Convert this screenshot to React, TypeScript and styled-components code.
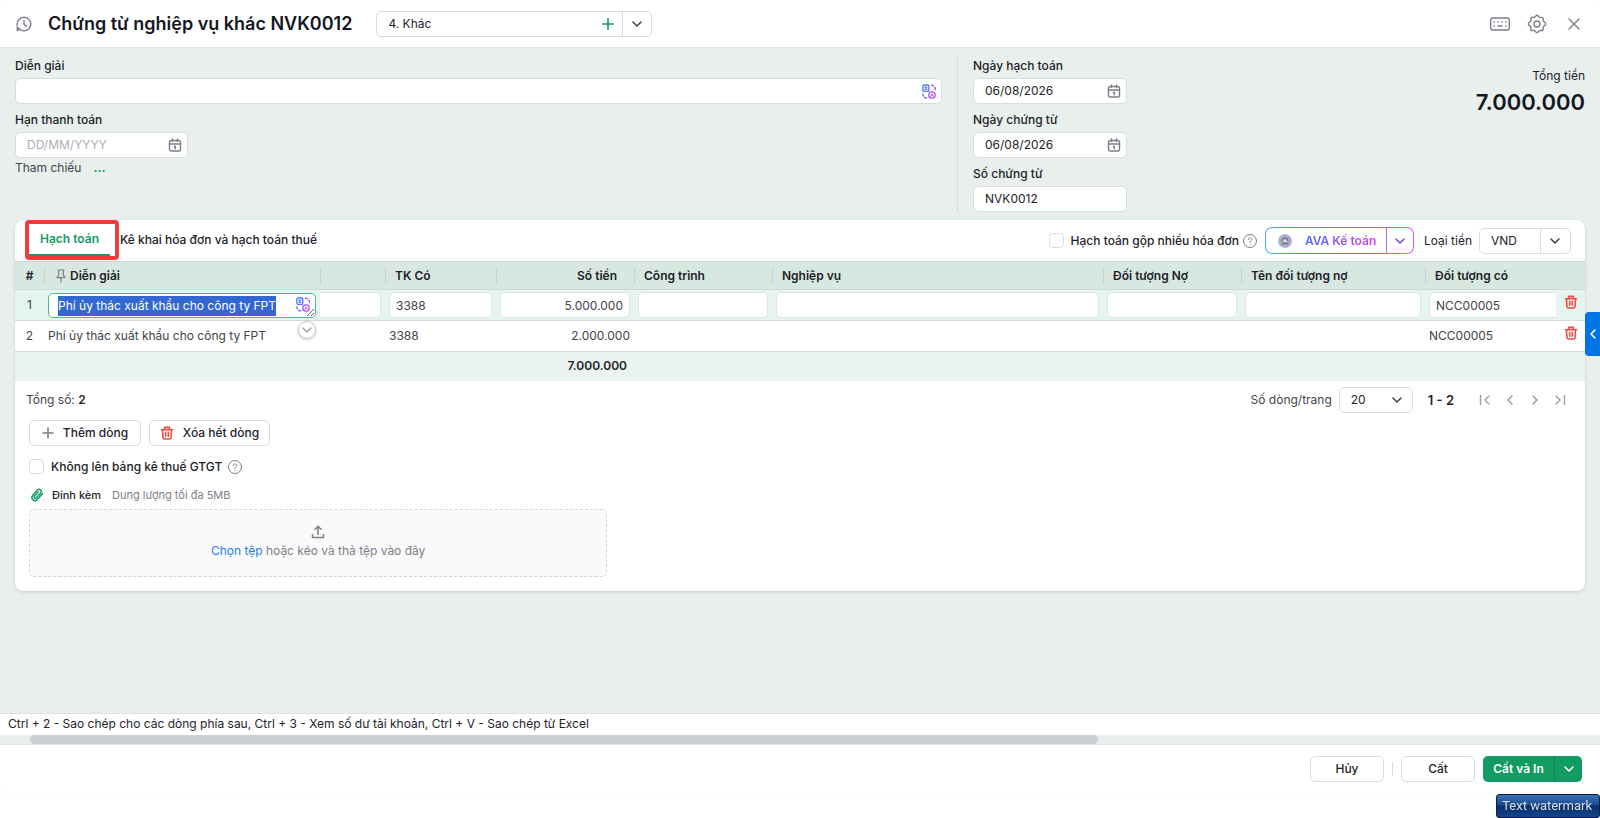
import React, { useEffect, useRef } from 'react';
import styled, { createGlobalStyle, css } from 'styled-components';

const c = {
  text: '#1f2229',
  soft: '#3f434c',
  grey: '#7b7f8a',
  faint: '#9a9ea9',
  line: '#d9dce1',
  canvas: '#e8efec',
  head: '#d8e8e0',
  active: '#e5f4ee',
  green: '#129b62',
  red: '#f04a40',
  blue: '#2680eb',
};

const Global = createGlobalStyle`
  *, *::before, *::after { box-sizing: border-box; }
  body { margin: 0; background: #fff; }
  body, button, input, select, textarea {
    font-family: Inter, "Liberation Sans", sans-serif;
    font-size: 12px;
    line-height: 20px;
    color: ${c.text};
  }
  button { cursor: pointer; }
`;

const Page = styled.div`
  display: flex;
  flex-direction: column;
  min-height: 100vh;
  padding-bottom: 25px;
  background: #fff;
`;

const Window = styled.div`
  display: flex;
  flex-direction: column;
  flex: 1;
  border-radius: 8px;
  box-shadow: 0 0 1px #e3e6e8;
  background: #fff;
`;

const Header = styled.header`
  display: flex;
  align-items: center;
  height: 48px;
  padding: 0 16px;
  border-bottom: 1px solid #dde1e2;
`;

const Title = styled.h1`
  margin: 0 24px 0 0;
  font-size: 18px;
  font-weight: 600;
  line-height: 28px;
  color: #14171f;
`;

const IconButton = styled.button<{ $tone?: string }>`
  display: inline-flex;
  align-items: center;
  justify-content: center;
  flex: none;
  padding: 0;
  border: 0;
  background: none;
  color: ${(p) => p.$tone ?? c.grey};
`;

const HistoryButton = styled(IconButton)`
  margin-right: 16px;
`;

const ToolButton = styled(IconButton)`
  width: 20px;
`;

const Combo = styled.div<{ $width: number }>`
  display: flex;
  width: ${(p) => p.$width}px;
  height: 26px;
  border: 1px solid ${c.line};
  border-radius: 5px;
  background: #fff;
  overflow: hidden;
`;

const ComboInput = styled.input`
  flex: 1;
  min-width: 0;
  padding: 0 11px;
  border: 0;
  outline: 0;
  background: none;
`;

const ComboArrow = styled(IconButton)`
  width: 29px;
  border-left: 1px solid ${c.line};
  color: ${c.soft};
`;

const AddButton = styled(IconButton)`
  width: 28px;
`;

const HeaderTools = styled.div`
  display: flex;
  align-items: center;
  gap: 17px;
  margin-left: auto;
`;

const Body = styled.main`
  flex: 1;
  padding: 8px 15px 100px;
  background: ${c.canvas};
`;

const Form = styled.section`
  display: flex;
`;

const FormLeft = styled.div`
  flex: 1;
  padding-right: 15px;
`;

const FormRight = styled.div`
  width: 458px;
  padding-left: 15px;
  border-left: 1px solid #d5dadb;
`;

const Total = styled.div`
  width: 170px;
  padding-top: 10px;
  text-align: right;
`;

const TotalValue = styled.div`
  font-size: 22px;
  font-weight: 600;
  line-height: 32px;
  color: #14171f;
`;

const Field = styled.div<{ $width?: number; $last?: boolean }>`
  display: flex;
  flex-direction: column;
  width: ${(p) => (p.$width ? p.$width + 'px' : '100%')};
  padding-bottom: ${(p) => (p.$last ? 0 : 6)}px;
`;

const Label = styled.label`
  padding-bottom: 2px;
  line-height: 20px;
  font-weight: 500;
`;

const Box = styled.div`
  display: flex;
  align-items: center;
  height: 26px;
  padding-right: 5px;
  border: 1px solid ${c.line};
  border-radius: 5px;
  background: #fff;
`;

const BoxInput = styled.input`
  flex: 1;
  min-width: 0;
  padding: 0 11px;
  border: 0;
  outline: 0;
  background: none;
  &::placeholder { color: #a9adb8; }
`;

const Refs = styled.div`
  display: flex;
  gap: 12px;
  color: ${c.soft};
`;

const MoreLink = styled.a`
  font-weight: 700;
  color: ${c.green};
  text-decoration: none;
`;

const Card = styled.section`
  margin-top: 8px;
  border-radius: 8px;
  background: #fff;
  box-shadow: 0 1px 3px rgba(30, 50, 45, 0.18);
`;

const TabBar = styled.div`
  display: flex;
  align-items: center;
  height: 41px;
  padding: 0 14px 0 10px;
`;

const Highlight = styled.div`
  display: flex;
  flex: none;
  align-self: flex-start;
  width: 94px;
  height: 40px;
  border: 4px solid #ee3d3d;
  border-radius: 4px;
`;

const Tab = styled.button<{ $active?: boolean }>`
  height: 32px;
  padding: ${(p) => (p.$active ? '0 11px' : '0 1px')};
  border: 0;
  border-bottom: 2px solid ${(p) => (p.$active ? c.green : 'transparent')};
  background: none;
  font-weight: ${(p) => (p.$active ? 600 : 500)};
  color: ${(p) => (p.$active ? c.green : c.text)};
  white-space: nowrap;
`;

const TabTools = styled.div`
  display: flex;
  align-items: center;
  margin-left: auto;
`;

const Check = styled.input`
  appearance: none;
  flex: none;
  width: 15px;
  height: 15px;
  margin: 0 7px 0 0;
  border: 1px solid ${c.line};
  border-radius: 4px;
  background: #fff;
`;

const CheckLabel = styled.label`
  display: inline-flex;
  align-items: center;
  margin-right: 4px;
  font-weight: 500;
`;

const AvaGroup = styled.div`
  display: flex;
  width: 149px;
  height: 27px;
  margin: 0 10px 0 8px;
  border: 1px solid transparent;
  border-radius: 7px;
  background:
    linear-gradient(#fff, #fff) padding-box,
    linear-gradient(90deg, #4aa8ff, #8a63ff 55%, #e453f2) border-box;
`;

const AvaMain = styled.button`
  display: flex;
  align-items: center;
  flex: 1;
  gap: 13px;
  padding: 0 0 0 12px;
  border: 0;
  border-right: 1px solid #a86bff;
  background: none;
`;

const AvaText = styled.span`
  background: linear-gradient(90deg, #4c6bff, #d43cf0);
  background-clip: text;
  color: transparent;
  font-weight: 600;
`;

const AvaArrow = styled(IconButton)`
  width: 26px;
  color: #5b5bf0;
`;

const SelectShell = styled.div<{ $width: number; $divided?: boolean }>`
  display: grid;
  grid-template-columns: 1fr 30px;
  align-items: center;
  width: ${(p) => p.$width}px;
  height: 26px;
  border: 1px solid ${c.line};
  border-radius: 5px;
  background: #fff;
  color: ${c.soft};
  svg {
    grid-area: 1 / 2;
    justify-self: center;
    pointer-events: none;
  }
  ${(p) =>
    p.$divided &&
    css`
      background: linear-gradient(${c.line}, ${c.line}) right 29px top / 1px 100% no-repeat #fff;
    `}
`;

const Select = styled.select`
  grid-area: 1 / 1 / 2 / 3;
  appearance: none;
  width: 100%;
  height: 24px;
  padding: 0 11px;
  border: 0;
  outline: 0;
  background: none;
`;

const SideLabel = styled.label`
  margin-right: 7px;
`;

const Table = styled.table`
  width: 100%;
  table-layout: fixed;
  border-collapse: collapse;
  border-top: 1px solid #c9d5d0;
`;

const Col = styled.col<{ $w?: number }>`
  width: ${(p) => (p.$w ? p.$w + 'px' : 'auto')};
`;

const Th = styled.th<{ $right?: boolean; $index?: boolean; $bare?: boolean }>`
  height: 28px;
  padding: ${(p) => (p.$index ? '0' : '0 17px 0 10px')};
  border-bottom: 1px solid #cbd8d3;
  background:
    linear-gradient(#c5d3cd, #c5d3cd) left center / ${(p) => (p.$bare ? 0 : 1)}px 17px no-repeat,
    ${c.head};
  font-weight: 600;
  text-align: ${(p) => (p.$index ? 'center' : p.$right ? 'right' : 'left')};
  white-space: nowrap;
`;

const PinHead = styled.span`
  display: flex;
  align-items: center;
  gap: 4px;
  padding-left: 2px;
  svg { color: ${c.grey}; }
`;

const Row = styled.tr<{ $active?: boolean }>`
  height: 31px;
  border-bottom: 1px solid #d3dad8;
  background: ${(p) => (p.$active ? c.active : '#fff')};
`;

const SumRow = styled.tr`
  height: 29px;
  background: #eaf3f0;
  font-weight: 600;
`;

const Td = styled.td<{ $align?: string; $pad?: string }>`
  padding: ${(p) => p.$pad ?? '0 4px'};
  text-align: ${(p) => p.$align ?? 'left'};
  white-space: nowrap;
  color: ${c.soft};
`;

const SumTd = styled(Td)`
  color: ${c.text};
`;

const CellInput = styled.input<{ $right?: boolean; $cut?: 'left' | 'right' }>`
  display: block;
  width: 100%;
  height: 26px;
  padding: 0 6px;
  border: 1px solid #e0e4e5;
  border-radius: 5px;
  outline: 0;
  background: #fff;
  color: ${c.soft};
  text-align: ${(p) => (p.$right ? 'right' : 'left')};
  ${(p) => p.$cut === 'left' && 'border-left: 0; border-top-left-radius: 0; border-bottom-left-radius: 0;'}
  ${(p) => p.$cut === 'right' && 'border-right: 0; border-top-right-radius: 0; border-bottom-right-radius: 0;'}
`;

const EditCell = styled.div`
  position: relative;
`;

const EditArea = styled.textarea`
  display: block;
  width: 100%;
  height: 25px;
  padding: 2px 36px 0 9px;
  border: 1px solid #4cb88a;
  border-radius: 5px;
  outline: 0;
  overflow: hidden;
  background: #fff;
  resize: both;
  white-space: nowrap;
  &::selection {
    background: #3367d1;
    color: #fff;
  }
`;

const EditIcon = styled.span`
  position: absolute;
  top: 4px;
  right: 6px;
  display: flex;
`;

const Expand = styled(IconButton)`
  position: absolute;
  top: 28px;
  right: 0;
  width: 18px;
  height: 18px;
  border: 1px solid #c6c9cf;
  border-radius: 50%;
  background: #fff;
  color: #a3a7af;
  box-shadow: 0 1px 3px rgba(0, 0, 0, 0.2);
`;

const Pager = styled.div`
  display: flex;
  align-items: center;
  height: 39px;
  padding: 0 18px 0 11px;
  color: ${c.soft};
`;

const Strong = styled.strong`
  font-weight: 600;
  color: ${c.text};
`;

const PagerTools = styled.div`
  display: flex;
  align-items: center;
  margin-left: auto;
`;

const PageRange = styled.strong`
  margin: 0 24px 0 15px;
  font-size: 13px;
  font-weight: 600;
  color: ${c.text};
`;

const PageNav = styled.div`
  display: flex;
  gap: 11px;
`;

const Actions = styled.div`
  display: flex;
  gap: 8px;
  padding: 0 14px;
`;

const Button = styled.button<{ $width?: number }>`
  display: inline-flex;
  align-items: center;
  justify-content: center;
  gap: 9px;
  width: ${(p) => (p.$width ? p.$width + 'px' : 'auto')};
  height: 26px;
  padding: 0 11px;
  border: 1px solid ${c.line};
  border-radius: 5px;
  background: #fff;
  font-weight: 500;
  white-space: nowrap;
  svg { color: ${c.grey}; }
  span svg { color: ${c.red}; }
`;

const OptionRow = styled.div`
  display: flex;
  align-items: center;
  gap: 2px;
  padding: 11px 14px 8px;
`;

const Attach = styled.div`
  display: flex;
  align-items: center;
  padding: 0 15px;
  font-size: 11px;
  color: ${c.grey};
`;

const AttachTitle = styled.span`
  margin: 0 11px 0 8px;
  font-weight: 500;
  color: ${c.text};
`;

const DropWrap = styled.div`
  display: grid;
  grid-template-columns: 3fr 5fr;
  padding: 4px 14px 14px;
`;

const Drop = styled.div`
  display: flex;
  flex-direction: column;
  align-items: center;
  justify-content: center;
  gap: 2px;
  height: 68px;
  border: 1px dashed #d3d6da;
  border-radius: 5px;
  background: #fafafb;
  color: ${c.grey};
`;

const PickLink = styled.a`
  color: ${c.blue};
  text-decoration: none;
`;

const Hint = styled.div`
  height: 22px;
  padding: 0 8px;
  border-top: 1px solid #dde1e2;
  background: #fff;
`;

const Track = styled.div`
  height: 10px;
  padding-left: 30px;
  border-bottom: 1px solid #dde1e2;
  background: ${c.canvas};
`;

const Thumb = styled.div`
  width: 68%;
  height: 9px;
  border-radius: 5px;
  background: #cccfd4;
`;

const Footer = styled.footer`
  display: flex;
  align-items: center;
  justify-content: flex-end;
  gap: 8px;
  height: 48px;
  padding: 0 18px 0 15px;
`;

const Divider = styled.span`
  width: 1px;
  height: 14px;
  background: ${c.line};
`;

const SaveGroup = styled.div`
  display: flex;
  height: 26px;
  border-radius: 5px;
  background: ${c.green};
  overflow: hidden;
`;

const SaveMain = styled.button`
  width: 72px;
  padding: 0;
  border: 0;
  border-right: 1px solid #0c8552;
  background: none;
  color: #fff;
  font-weight: 600;
`;

const SaveArrow = styled(IconButton)`
  width: 27px;
  color: #fff;
`;

const SideHandle = styled(IconButton)`
  position: absolute;
  top: 312px;
  right: 0;
  width: 15px;
  height: 44px;
  border-radius: 4px 0 0 4px;
  background: #0073e6;
  color: #fff;
`;

const Watermark = styled.div`
  position: fixed;
  right: 0;
  bottom: 0;
  height: 24px;
  padding: 0 7px 0 5px;
  border: 1px solid #0b1c3c;
  border-radius: 3px;
  background: linear-gradient(#3a72b4, #1c4c90 45%, #0b2f66 50%, #11448f);
  font-family: Roboto, Inter, sans-serif;
  font-size: 13px;
  line-height: 22px;
  color: #d8dde6;
`;

const Svg = ({ s = 16, w, children, sw = 1.4 }: { s?: number; w?: number; children: React.ReactNode; sw?: number }) => (
  <svg width={w ?? s} height={s} viewBox={`0 0 ${w ?? s} ${s}`} fill="none" stroke="currentColor" strokeWidth={sw} strokeLinecap="round" strokeLinejoin="round" aria-hidden="true">
    {children}
  </svg>
);

const Chevron = () => (
  <Svg s={12} sw={1.6}><path d="M2 4l4 4 4-4" /></Svg>
);
const Plus = () => (
  <Svg s={12} sw={1.6}><path d="M6 1v10M1 6h10" /></Svg>
);
const History = () => (
  <Svg>
    <path d="M1.300 9.500A6.800 6.800 0 1 1 5 14.200" />
    <path d="M.9 10.800v4.200l3.900-1.500z" fill="currentColor" strokeWidth="0.6" />
    <path d="M8 4.600v3.600l2.400 2" />
  </Svg>
);
const Keyboard = () => (
  <Svg s={14} w={20} sw={1.4}>
    <rect x="0.7" y="1" width="18.6" height="12" rx="1.5" />
    <path d="M4 5h.4M7.800 5h.4M11.800 5h.4M15.600 5h.4M4 9h.4M15.600 9h.4M8 9h4" />
  </Svg>
);
const Gear = () => (
  <Svg s={20} sw={1.4}>
    <path d="M10 1.300c1.200 0 1.500 1.700 2.500 2.100s2.500-.6 3.400.3 0 2.300.4 3.300 2.400 1.400 2.400 2.900-1.900 1.900-2.400 2.900.5 2.500-.4 3.400-2.300-.1-3.400.4-1.300 2.100-2.500 2.100-1.500-1.700-2.500-2.100-2.500.5-3.400-.4 0-2.300-.4-3.400-2.400-1.400-2.400-2.900 1.900-1.900 2.400-2.900-.5-2.400.4-3.300 2.400 0 3.400-.3S8.800 1.300 10 1.300z" />
    <circle cx="10" cy="10" r="3" />
  </Svg>
);
const Cross = () => (
  <Svg s={12}><path d="M1 1l10 10M11 1L1 11" /></Svg>
);
const Calendar = () => (
  <Svg s={14} sw={1.4}>
    <rect x="1.500" y="2.500" width="11" height="10.500" rx="1.800" />
    <path d="M1.500 6h11M4.500 1v2.500M9.500 1v2.500M6.400 8.700l.9-.5v2.600" />
  </Svg>
);
const Pin = () => (
  <Svg s={14} w={10} sw={1.2}><path d="M2 1h6M2.700 1v5L1 8.600h8L7.300 6V1M5 8.600v4.200" /></Svg>
);
const Trash = () => (
  <Svg s={14} sw={1.6}>
    <path d="M1.500 3.700h11M4.600 3.500V1.400h4.800v2.100M2.500 3.700l.4 7.500c.1 1.100.7 1.800 1.800 1.800h4.600c1.100 0 1.700-.7 1.800-1.800l.4-7.500M5.700 6.200v4M8.300 6.200v4" />
  </Svg>
);
const Help = () => (
  <Svg s={14} sw={1}>
    <circle cx="7" cy="7" r="6.500" />
    <path d="M5.300 5.600c0-2.300 3.500-2.200 3.500-.1C8.800 6.800 7 6.800 7 8.300M7 10.200v.2" />
  </Svg>
);
const Clip = () => (
  <Svg s={14} sw={1.5}>
    <path d="M12.600 5.600l-5 5.700c-3 3.300-7.600-.6-4.800-4l4.400-5c2.200-2.400 5.300.3 3.400 2.700L6.400 9.700c-1.300 1.400-3-.1-1.900-1.500l3.700-4.200" />
  </Svg>
);
const Upload = () => (
  <Svg s={14} sw={1.5}><path d="M7 9.500V1.500M4 4.300l3-3 3 3M1.500 9.500v3h11v-3" /></Svg>
);
const Translate = ({ id }: { id: string }) => (
  <svg width="14" height="15" viewBox="0 0 14 15" fill="none" stroke={`url(#${id})`} strokeWidth="1.3" strokeLinecap="round" aria-hidden="true">
    <defs>
      <linearGradient id={id} gradientUnits="userSpaceOnUse" x1="0" y1="4" x2="14" y2="10">
        <stop stopColor="#2f8dff" />
        <stop offset="0.5" stopColor="#7a5cff" />
        <stop offset="1" stopColor="#d83cf2" />
      </linearGradient>
    </defs>
    <rect x="0.800" y="1" width="6" height="6.400" rx="1.2" />
    <path d="M2.600 3.200h2.400M2.600 5.400h2.400M3.800 3.200v2.200" strokeWidth="1" />
    <circle cx="10" cy="11" r="3.2" />
    <path d="M8.900 12.200L10 9.900l1.100 2.300" strokeWidth="1" />
    <path d="M9.300 1.200c.9 0 1.600.2 2.200.6M13 3.200c.3.700.4 1.400.4 2.200M.8 9.800c0 .9.200 1.600.6 2.200M2.700 13.400c.6.400 1.300.5 2 .5" />
  </svg>
);
const Avatar = () => (
  <svg width="14" height="14" viewBox="0 0 14 14" aria-hidden="true">
    <defs>
      <linearGradient id="ava-ring" x1="0" y1="0" x2="1" y2="0">
        <stop stopColor="#9cc0dc" />
        <stop offset="1" stopColor="#c9a4dc" />
      </linearGradient>
    </defs>
    <circle cx="7" cy="7" r="7" fill="url(#ava-ring)" />
    <circle cx="7" cy="7" r="5" fill="#a3a6b4" />
    <path d="M4 5c1.500-2 4.500-2 6 0v2H4z" fill="#70748a" />
    <path d="M5.200 5.400h3.600v2.800H5.200z" fill="#d8dbe4" />
    <path d="M3.800 10.600c1.200-2 5.200-2 6.400 0" stroke="#5b5f72" fill="none" />
  </svg>
);
const First = () => (
  <Svg s={14} sw={1.4}><path d="M2.500 2.500v9M11 3L7 7l4 4" /></Svg>
);
const Prev = () => (
  <Svg s={14} sw={1.6}><path d="M9 3L5 7l4 4" /></Svg>
);
const Next = () => (
  <Svg s={14} sw={1.6}><path d="M5 3l4 4-4 4" /></Svg>
);
const Last = () => (
  <Svg s={14} sw={1.4}><path d="M3 3l4 4-4 4M11.500 2.500v9" /></Svg>
);

const DateField = ({ id, label, value, width, placeholder, last }: { id: string; label: string; value?: string; width: number; placeholder?: string; last?: boolean }) => (
  <Field $width={width} $last={last}>
    <Label htmlFor={id}>{label}</Label>
    <Box>
      <BoxInput id={id} defaultValue={value} placeholder={placeholder} />
      <IconButton aria-label="Chọn ngày"><Calendar /></IconButton>
    </Box>
  </Field>
);

export default function App() {
  const area = useRef<HTMLTextAreaElement>(null);

  useEffect(() => {
    area.current?.focus();
    area.current?.select();
  }, []);

  return (
    <Page>
      <Global />
      <Window>
        <Header>
          <HistoryButton aria-label="Lịch sử"><History /></HistoryButton>
          <Title>Chứng từ nghiệp vụ khác NVK0012</Title>
          <Combo $width={276}>
            <ComboInput aria-label="Loại chứng từ" defaultValue="4. Khác" />
            <AddButton $tone={c.green} aria-label="Thêm"><Plus /></AddButton>
            <ComboArrow aria-label="Mở danh sách"><Chevron /></ComboArrow>
          </Combo>
          <HeaderTools>
            <ToolButton aria-label="Phím tắt"><Keyboard /></ToolButton>
            <ToolButton aria-label="Thiết lập"><Gear /></ToolButton>
            <ToolButton aria-label="Đóng"><Cross /></ToolButton>
          </HeaderTools>
        </Header>

        <Body>
          <Form>
            <FormLeft>
              <Field>
                <Label htmlFor="desc">Diễn giải</Label>
                <Box>
                  <BoxInput id="desc" />
                  <Translate id="tr-main" />
                </Box>
              </Field>
              <DateField id="due" label="Hạn thanh toán" width={173} placeholder="DD/MM/YYYY" last />
              <Refs>
                Tham chiếu <MoreLink href="#ref">...</MoreLink>
              </Refs>
            </FormLeft>
            <FormRight>
              <DateField id="posted" label="Ngày hạch toán" value="06/08/2026" width={154} />
              <DateField id="issued" label="Ngày chứng từ" value="06/08/2026" width={154} />
              <Field $width={154} $last>
                <Label htmlFor="number">Số chứng từ</Label>
                <Box><BoxInput id="number" defaultValue="NVK0012" /></Box>
              </Field>
            </FormRight>
            <Total>
              Tổng tiền
              <TotalValue>7.000.000</TotalValue>
            </Total>
          </Form>

          <Card>
            <TabBar>
              <Highlight><Tab $active>Hạch toán</Tab></Highlight>
              <Tab>Kê khai hóa đơn và hạch toán thuế</Tab>
              <TabTools>
                <CheckLabel>
                  <Check type="checkbox" />
                  Hạch toán gộp nhiều hóa đơn
                </CheckLabel>
                <IconButton aria-label="Trợ giúp"><Help /></IconButton>
                <AvaGroup>
                  <AvaMain><Avatar /><AvaText>AVA Kế toán</AvaText></AvaMain>
                  <AvaArrow aria-label="Mở AVA"><Chevron /></AvaArrow>
                </AvaGroup>
                <SideLabel htmlFor="currency">Loại tiền</SideLabel>
                <SelectShell $width={92} $divided>
                  <Select id="currency"><option>VND</option></Select>
                  <Chevron />
                </SelectShell>
              </TabTools>
            </TabBar>

            <Table>
              <colgroup>
                <Col $w={29} />
                <Col $w={276} />
                <Col $w={65} />
                <Col $w={111} />
                <Col $w={138} />
                <Col $w={138} />
                <Col />
                <Col $w={138} />
                <Col $w={184} />
                <Col $w={131} />
                <Col $w={29} />
              </colgroup>
              <thead>
                <tr>
                  <Th $index $bare>#</Th>
                  <Th><PinHead><Pin />Diễn giải</PinHead></Th>
                  <Th />
                  <Th>TK Có</Th>
                  <Th $right>Số tiền</Th>
                  <Th>Công trình</Th>
                  <Th>Nghiệp vụ</Th>
                  <Th>Đối tượng Nợ</Th>
                  <Th>Tên đối tượng nợ</Th>
                  <Th>Đối tượng có</Th>
                  <Th $bare />
                </tr>
              </thead>
              <tbody>
                <Row $active>
                  <Td $align="center" $pad="0">1</Td>
                  <Td>
                    <EditCell>
                      <EditArea ref={area} rows={1} aria-label="Diễn giải" defaultValue="Phí ủy thác xuất khẩu cho công ty FPT" />
                      <EditIcon><Translate id="tr-row" /></EditIcon>
                      <Expand aria-label="Mở rộng"><Chevron /></Expand>
                    </EditCell>
                  </Td>
                  <Td $pad="0 4px 0 0"><CellInput aria-label="TK Nợ" $cut="left" /></Td>
                  <Td><CellInput aria-label="TK Có" defaultValue="3388" /></Td>
                  <Td><CellInput aria-label="Số tiền" defaultValue="5.000.000" $right /></Td>
                  <Td><CellInput aria-label="Công trình" /></Td>
                  <Td><CellInput aria-label="Nghiệp vụ" /></Td>
                  <Td><CellInput aria-label="Đối tượng Nợ" /></Td>
                  <Td><CellInput aria-label="Tên đối tượng nợ" /></Td>
                  <Td $pad="0 0 0 4px"><CellInput aria-label="Đối tượng có" defaultValue="NCC00005" $cut="right" /></Td>
                  <Td $align="center" $pad="0"><IconButton $tone={c.red} aria-label="Xóa dòng 1"><Trash /></IconButton></Td>
                </Row>
                <Row>
                  <Td $align="center" $pad="0">2</Td>
                  <Td>Phí ủy thác xuất khẩu cho công ty FPT</Td>
                  <Td />
                  <Td>3388</Td>
                  <Td $align="right">2.000.000</Td>
                  <Td />
                  <Td />
                  <Td />
                  <Td />
                  <Td>NCC00005</Td>
                  <Td $align="center" $pad="0"><IconButton $tone={c.red} aria-label="Xóa dòng 2"><Trash /></IconButton></Td>
                </Row>
              </tbody>
              <tfoot>
                <SumRow>
                  <Td colSpan={4} />
                  <SumTd $align="right" $pad="0 7px">7.000.000</SumTd>
                  <Td colSpan={6} />
                </SumRow>
              </tfoot>
            </Table>

            <Pager>
              <span>Tổng số: <Strong>2</Strong></span>
              <PagerTools>
                <SideLabel htmlFor="size">Số dòng/trang</SideLabel>
                <SelectShell $width={74}>
                  <Select id="size"><option>20</option></Select>
                  <Chevron />
                </SelectShell>
                <PageRange>1 - 2</PageRange>
                <PageNav>
                  <IconButton $tone={c.faint} aria-label="Trang đầu"><First /></IconButton>
                  <IconButton $tone={c.faint} aria-label="Trang trước"><Prev /></IconButton>
                  <IconButton $tone={c.faint} aria-label="Trang sau"><Next /></IconButton>
                  <IconButton $tone={c.faint} aria-label="Trang cuối"><Last /></IconButton>
                </PageNav>
              </PagerTools>
            </Pager>

            <Actions>
              <Button $width={112}><Plus />Thêm dòng</Button>
              <Button $width={121}><IconButton as="span"><Trash /></IconButton>Xóa hết dòng</Button>
            </Actions>

            <OptionRow>
              <CheckLabel><Check type="checkbox" />Không lên bảng kê thuế GTGT</CheckLabel>
              <IconButton aria-label="Trợ giúp"><Help /></IconButton>
            </OptionRow>

            <Attach>
              <IconButton $tone={c.green} aria-label="Đính kèm"><Clip /></IconButton>
              <AttachTitle>Đính kèm</AttachTitle>
              Dung lượng tối đa 5MB
            </Attach>
            <DropWrap>
              <Drop>
                <Upload />
                <span><PickLink href="#file">Chọn tệp</PickLink> hoặc kéo và thả tệp vào đây</span>
              </Drop>
            </DropWrap>
          </Card>
        </Body>

        <Hint>Ctrl + 2 - Sao chép cho các dòng phía sau, Ctrl + 3 - Xem số dư tài khoản, Ctrl + V - Sao chép từ Excel</Hint>
        <Track><Thumb /></Track>
        <Footer>
          <Button $width={74}>Hủy</Button>
          <Divider />
          <Button $width={74}>Cất</Button>
          <SaveGroup>
            <SaveMain>Cất và In</SaveMain>
            <SaveArrow aria-label="Tùy chọn in"><Chevron /></SaveArrow>
          </SaveGroup>
        </Footer>
      </Window>
      <SideHandle aria-label="Mở bảng bên"><Prev /></SideHandle>
      <Watermark>Text watermark</Watermark>
    </Page>
  );
}
